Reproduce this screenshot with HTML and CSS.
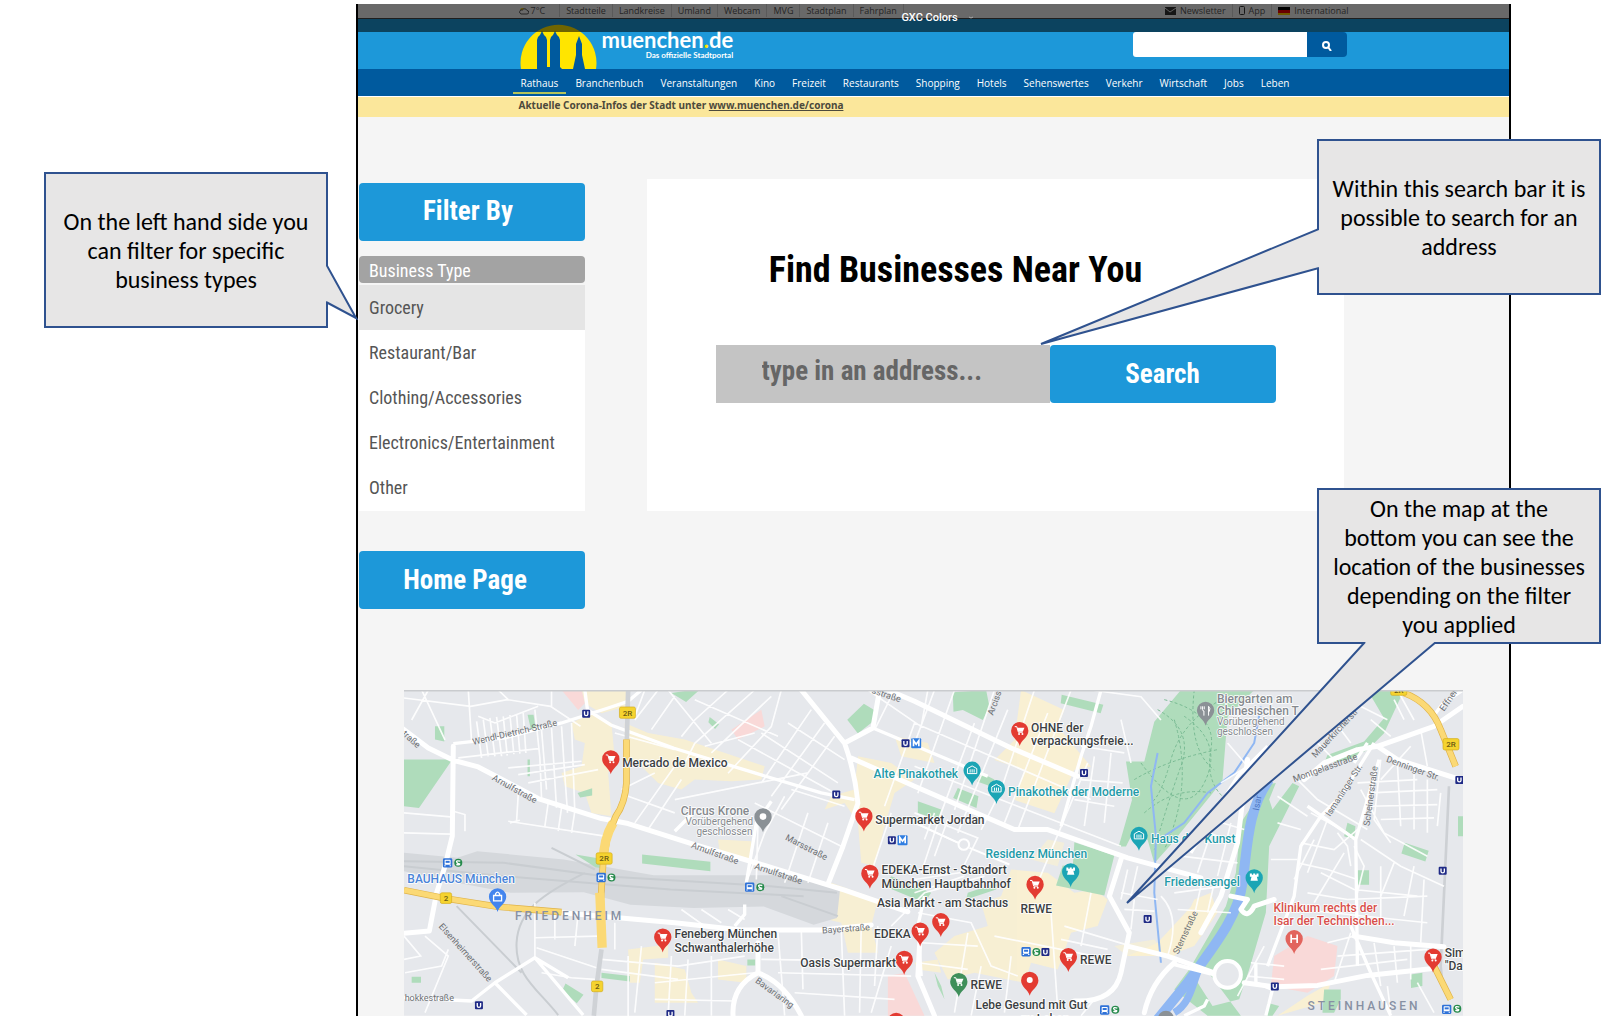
FILE: index.html
```html
<!DOCTYPE html>
<html lang="en">
<head>
<meta charset="utf-8">
<title>Find Businesses Near You</title>
<link rel="stylesheet" href="styles.css">
</head>
<body>
<div class="frame">
  <header class="site-header">
    <div class="topbar">
      <div class="container topbar-row">
        <span class="weather"><svg width="10" height="8" viewBox="0 0 20 16"><circle cx="7" cy="7" r="5" fill="#e8c200"/><path d="M4 14h12a3 3 0 0 0 0-7 5 5 0 0 0-9-1 4 4 0 0 0-3 8z" fill="#eee" stroke="#555" stroke-width="2"/></svg>7°C</span>
        <a href="#">Stadtteile</a><a href="#">Landkreise</a><a href="#">Umland</a><a href="#">Webcam</a><a href="#">MVG</a><a href="#">Stadtplan</a><a href="#">Fahrplan</a>
        <a href="#" class="push"><svg width="11" height="8" viewBox="0 0 11 8"><path d="M0 0h11v8H0z" fill="#333"/><path d="M0 1l5 4 6-4" fill="none" stroke="#ddd"/></svg>Newsletter</a>
        <a href="#"><svg width="6" height="9" viewBox="0 0 6 9"><rect x=".5" y=".5" width="5" height="8" rx="1" fill="none" stroke="#333"/></svg>App</a>
        <a href="#"><svg width="12" height="8" viewBox="0 0 12 8"><path d="M0 0h12v3H0z" fill="#000"/><path d="M0 3h12v3H0z" fill="#e00"/><path d="M0 6h12v2H0z" fill="#fc0"/></svg>International</a>
      </div>
    </div>
    <div class="brandbar">
      <div class="container brand-row">
        <a href="#" class="brand" aria-label="muenchen.de">
          <svg class="logo" width="78" height="46" viewBox="0 0 78 46">
            <path d="M2 46A38 38 0 1 1 77 46Z" fill="#ffe500"/>
            <path d="M18 46V17q0-3 3-5l2-4 2 4q3 2 3 5v27h3V17q0-3 3-5l2-4 2 4q3 2 3 5v27l2 2zM54 46l3-14V21l3-8 3 8v11l3 14z" fill="#005a9e"/>
          </svg>
          <span class="brand-text"><span class="brand-name">muenchen<i>.</i>de</span><span class="brand-tag">Das offizielle Stadtportal</span></span>
        </a>
        <form class="site-search">
          <input type="search" aria-label="Site search">
          <button type="button" aria-label="Search site"><svg width="10" height="10" viewBox="0 0 10 10" fill="none" stroke="#fff" stroke-width="2"><circle cx="4" cy="4" r="3"/><path d="M6 6l3 4"/></svg></button>
        </form>
      </div>
    </div>
    <nav class="nav">
      <div class="container nav-row">
        <a href="#" class="active">Rathaus</a><a href="#">Branchenbuch</a><a href="#">Veranstaltungen</a><a href="#">Kino</a><a href="#">Freizeit</a><a href="#">Restaurants</a><a href="#">Shopping</a><a href="#">Hotels</a><a href="#">Sehenswertes</a><a href="#">Verkehr</a><a href="#">Wirtschaft</a><a href="#">Jobs</a><a href="#">Leben</a>
      </div>
    </nav>
    <div class="notice"><p class="container">Aktuelle Corona-Infos der Stadt unter <a href="#">www.muenchen.de/corona</a></p></div>
    <div class="shade"><span>GXC Colors</span><svg width="6" height="4" viewBox="0 0 6 4"><path d="M1 1l2 1 2-1" fill="none" stroke="#aaa"/></svg></div>
  </header>

  <main class="content">
    <aside class="sidebar">
      <button type="button" class="btn filter">Filter By</button>
      <h2 class="group">Business Type</h2>
      <ul class="types">
        <li><button type="button" class="selected">Grocery</button></li>
        <li><button type="button">Restaurant/Bar</button></li>
        <li><button type="button">Clothing/Accessories</button></li>
        <li><button type="button">Electronics/Entertainment</button></li>
        <li><button type="button">Other</button></li>
      </ul>
      <button type="button" class="btn home">Home Page</button>
    </aside>
    <section class="finder">
      <h1>Find Businesses Near You</h1>
      <form class="address">
        <input type="text" aria-label="Address" placeholder="type in an address...">
        <button type="button" class="btn">Search</button>
      </form>
    </section>
  </main>

  <div class="map">
  <svg viewBox="27 31 3180 978" role="img" aria-label="Map of Munich">
    <defs>
      <path id="pin" d="M0 46C-4 28-26 20-26 0A26 26 0 1 1 26 0C26 20 4 28 0 46Z"/>
      <g id="cart"><use href="#pin"/><path d="M-15-12h6l5 17h13" fill="none" stroke="#fff" stroke-width="3"/><path d="M-8-9h22l-5 12H-4z" fill="#fff"/><circle cx="-2" cy="10" r="3" fill="#fff"/><circle cx="8" cy="10" r="3" fill="#fff"/></g>
      <g id="museum"><use href="#pin"/><path d="M-14-5L0-13 14-5V10H-14Z" fill="none" stroke="#fff" stroke-width="3"/><path d="M-6-3V7M0-3V7M6-3V7" stroke="#fff" stroke-width="3"/></g>
      <g id="rook"><use href="#pin"/><path d="M-13-13h6v4h4v-4h6v4h4v-4h6v10H8l3 12h-22l3-12h-5z" fill="#fff"/></g>
      <g id="u"><rect x="-12" y="-12" width="24" height="24" rx="3" fill="#1f2a86"/><path d="M-5-7V2q0 4 5 4t5-4v-9" fill="none" stroke="#fff" stroke-width="4"/></g>
      <g id="bus"><rect x="-14" y="-14" width="28" height="28" rx="4" fill="#2f72d8"/><rect x="-9" y="-9" width="18" height="15" rx="2" fill="#fff"/><path d="M-6-6H6V0H-6Z" fill="#2f72d8"/><path d="M-8 7v3M8 7v3" stroke="#fff" stroke-width="4"/></g>
      <g id="s"><circle r="12" fill="#258a4b"/><path d="M6-5Q-6-8-5-3T4 3Q5 8-6 5" fill="none" stroke="#fff" stroke-width="4"/></g>
      <g id="m"><rect x="-15" y="-15" width="30" height="30" rx="3" fill="#2f7de1"/><path d="M-8 9V-8L0 3 8-8V9" fill="none" stroke="#fff" stroke-width="5"/></g>
    </defs>
    <rect x="27" y="31" width="3180" height="978" fill="#e6e8ec"/>

    <!-- built-up areas -->
    <g fill="#fbf1cf" opacity=".85">
      <path d="M560 31h140l-10 50-70 20-50-30zM530 130l60-30 60 30 10 110-20 40 10 130-60-10-20-60-60-20-10-40 60-20 10-70-30-10zM690 130l70 30 110 20 240 80-10 40-90 5-110-5-40 30-70-20-60-60-40-10z"/>
      <path d="M1390 230l100 20 70 50-60 40-30 100-30 120-40-10-10-120-40-60-60 20 20-40 70-20zM1500 170l100 20 20 60-100-20zM1310 610l140 50-20 80 20 80h-90l-20-90-40-10zM780 850l90 20 20 70 20 30h-130zM970 840l85 20v50l-85-10zM1560 850l70-10 10 40-70-10zM700 810l120-15v40l-75 5-10 70h-30zM970 480l100 5-5 55-90-20z"/>
      <path d="M1880 31l130 60-20 50 100 120-50 10-60 130-120-40 30-90-90-30 60-60zM1850 570l110 10 80 60 60-10 40 30-30 80-80 20-40 110-80-20-20 60-150-30-80 20-40-80 60-50 100-30-20-70 60-20zM2200 830l90-40 120-130 30 60-100 110zM2650 1009l90-60 70-40-20 60zM2400 660l50-20 20 60-70 100-80 30z"/>
    </g>
    <g fill="#f9d9d8"><path d="M500 31h60l10 40-20 20zM1010 150l90-60 10 50-80 40zM2640 830l100-60 90 30-10 90-80 50-110-20zM1480 890l50-10 60 129h-110z"/></g>
    <g fill="#fbf1cf" opacity=".6"><path d="M2160 800l120-20 30 40-110 10zM1960 480l50 10-20 70-80-20z"/></g>

    <!-- railway land -->
    <path d="M27 520l160 15 60-20 260 25 270 47h390l170 37-10 92-70 20-150-55-210 5-190-10-140-38-220 2-160-30-160-35z" fill="#d5d8dc"/>
    <path d="M27 545l300 5 300 40 500 30 200 20M27 560l300 30 500 40 400 20M470 505l130 65M570 580C450 640 370 690 365 790S430 930 490 1007M185 680L380 880M1160 650l170 60" fill="none" stroke="#c9cdd1" stroke-width="6"/>
    <path d="M3165 320l-25 540 5 50" fill="none" stroke="#cdd0d4" stroke-width="8"/>

    <!-- parks -->
    <g fill="#afdcbb">
      <path d="M27 240h145l-100 145-45-5zM120 140h28v46l-28-6zM398 105h18l6 40-14 4zM548 340l44-14v22l-36 6zM542 525l90 15v28l-30-5zM742 525l205 22v28l-205-23zM620 880l85 10v16l-85-10zM512 912l54 34-20 26-44-38zM50 892h28v18H50zM398 240h7v50h-7zM830 40l60-9h24l-40 36zM945 112l28 22-12 14-20-20zM1358 120l50-48 32 20v30l-50 40zM1058 840h24v18h-24zM1570 365l70 25-10 30-60-20zM1490 590l120 50-20 30-120-50zM1675 38l100-7 10 50-20 40-60-30-28 5zM1690 325l62 25-6 35-70-30zM1760 280l40 20-12 20-40-14zM2002 45l125 30-8 26-120-30zM2040 488l120 40-30 120-145-30 20-60 30 6zM1720 640l90-30-5 20-90 30zM1800 690l50 25zM1620 880l20 40 10 40-20-40z"/>
      <path d="M2360 31h220l-80 80-15 190-30 40-130 160-45 50-20-70-40-30-25 50h-22l40-140-18-115h55l30-120z"/>
      <path d="M2615 315l30-5-20 50 10 30 60-80 20 10-60 120-30 60-10 200-50 170-30 90-80 20-70-110 110-190 30-100 15-150zM2400 850l-60 80 100 79h100l-90-120zM2920 31h110l-60 130-50 50-60 30-70 10 10-25 110-40 60-70zM2860 430l24 10-4 40-30-10zM3032 490l72 24-10 32-72-24zM2890 572h35v44h-38zM3050 885l35-5v40l-34 6zM2790 930h50v30l-20 40h-35zM3192 410h15v60h-15zM2620 970l35 10-20 29h-20z"/>
    </g>
    <g fill="none" stroke="#78ba93" stroke-width="3" stroke-dasharray="9 7">
      <path d="M2290 90q110 60 70 170t-80 250M2310 60q160 40 140 150t60 160M2220 300q100-60 250-90M2240 250q130 180 190 60t-60-200M2250 400q90-80 200-60M2400 31q-20 180 60 240M2480 60q-120 70-150 180t-60 130M2340 120q60 200-30 390"/>
    </g>
    <g fill="none" stroke="#8fb7f3">
      <path d="M2625 300C2560 390 2560 500 2545 610S2450 810 2380 910L2290 1020" stroke-width="30"/>
      <path d="M2460 800C2390 860 2410 960 2340 1000" stroke-width="22"/>
      <path d="M2600 80l-20 110-60 90-80 60-70 90-60 40M2290 220l-20 100 15 150-5 170 20 210" stroke-width="6"/>
    </g>

    <!-- side streets -->
    <g fill="none" stroke="#fff" stroke-width="5" opacity=".9">
      <path d="M27 55l200 25 110-20 130 20 90 60M80 31l70 150M220 31l10 155M100 31l-50 90M340 60l-30-29M470 31v50M250 110l50 20 130-50M245 125l15 110M265 120l15 110M285 115l15 115M305 112l15 118M325 110l12 118M345 106l12 118M365 104l10 118M385 100l8 120M190 235l240-28M420 90l15 145 5 120M440 150l15 180M470 145l15 240M500 140l8 120 10 140M530 130l10 270M340 265l220-20M370 285l200-30M400 310l210-40M340 425l290 45M345 430l30-8M27 400l140 12M27 460l140 4M175 395l35 10v50M370 345l-5 80M460 370l-10 70M500 385l-10 70M540 395l-10 65"/>
      <path d="M660 160l180 50M750 31l-30 80M790 31l-70 90M840 50l-70 100M680 330l100-50M720 430l120-170M760 450l100-150M700 350l140 50M820 31l130 160M1000 31l-100 90-40 50M1080 31l-180 160-30 60M1130 50l-180 170M1160 31l-30 110-130 140M1250 90l-150 220M1290 130l-160 220M1320 170l-160 220M900 60l250 110M930 200l150-40M840 360l400-80M1080 370l260 130M1190 330l160 50M1170 350l-60 110-55 150M1240 400l-70 210M1300 430l-60 180M1090 430l-5 170M1180 130l170 110M1100 160l230 150M1030 180l290 160"/>
      <path d="M27 770l50 60-50 10M90 770l70 60-70 170M160 810l-20 50-110 20M420 670v170M420 775l190-5M425 805l180 60M440 880l90 15 70 5M480 690v90M550 700l-10 100M620 840l230 20M620 870l230 30M700 830v180M740 800l-20 200M660 730v80M850 860l200-30M780 910l300-30M780 960l240 5M830 830l-10 179M880 840l-10 169M950 830v179M1150 760l20 249M1220 750l5 180M1100 840l350 5M1150 880l400 10M1200 940l300 20M1340 750l10 259M1400 740l-5 260M1450 740l-10 180M1490 800l-60 200M860 690l70 50M920 690l60 40M1000 690l50 30"/>
      <path d="M1420 31l160 110 20-110M1500 31l-60 120M1560 130l-90 250M1620 31l-60 160M1680 31l-110 310M1740 130l-100 270-60 180M1800 31l-120 360M1840 90l-150 370M1920 31l-100 300-60 120M1960 100l-130 330M2030 31l-160 420M2080 250l-150 360M1560 130l530 230M1560 260l620 240M1560 400l190 75-40 80M1490 400l-60 180M1560 430l130 60M1620 400l-30 80M1660 420l-40 110M2090 31l150 20 60 70M2060 200l130 20M2055 300l130 10M2040 360l120 20M2100 230l-30 210M2150 220l-20 210M2180 120l30 130M1560 600l200-30M1560 640l150-50M1490 740l100-100 180-50M1570 700l160 30 60 130 80 30M1580 790l170 10M1570 850l150 20M1720 760l-40 240M1760 860l-30 149M1800 770l300 60M1850 830l-20 170M1970 700l20 290M2000 780l140 30M2010 740l200 60M2090 640l-30 160M2180 640l110 20M2190 690l90 5M2200 570l-20 90M2230 560l-20 90M2220 660l-10 90M2300 650q60 60 20 180M2100 960l-40 49"/>
      <path d="M2500 190l60 70-80 50M2450 420l100 30M2420 450l100 40M2360 530l170 20M2460 430l-50 150M2510 430l-40 160M2340 640l150-20M2350 690l160 10M2420 620l-20 90M2460 610l-20 90M2760 180l60 60M2810 110l60 80M2930 120l60 50M2860 60l120 60M3010 31l50 90M3080 150l20 110M3000 60l30 60M3050 200l-90 100M2710 300l60 60 150 90M2750 400l110 60M2720 490l100 20 70-60M2710 550l90 20 90 30M2650 430l70 20M2630 540h80M2650 350l90 60M2890 310l180-10M2930 340l200-10M2930 380l200-5M2960 420l160-5M2900 480l120 80 130 60M2900 330l70 130 130 70M2960 240l-20 180 50 70M3010 250l10 190M3060 270v180M3100 300v160M3140 340l-10 100M2830 460l30 40 10 60M2880 500l30 60-20 80M2780 580l100 50 190 20M2740 640l120 20 240-10M2720 690l380 40M2760 480l-60 120M2800 420l-60 160M2850 520l-90 150M2960 560v180M3000 550l-40 100M3060 560l-30 150M3090 600l-10 190M2800 790l80-20 100 20M2830 830l270-20M2780 870l260-30M2870 760l-50 150M2940 790l20 130M3000 800l10 110M3050 800v100M2980 920l10 80M3070 910l50 90M2570 850l100 10M2560 890l110 10M2610 800l-80 150"/>
    </g>
    <g fill="none" stroke="#fff" stroke-width="10" stroke-linejoin="round">
      <path d="M175 192L330 175 500 130 640 85 700 65 740 31M570 31l8 60 70 45 190 70 242 74 200 60 100 20M520 895L420 835 300 910 230 965 27 955M300 910l95 97M420 835l145 172M1435 145L1780 290M840 455l60-60M1055 610l30-180 45-65M1050 675v30l-30 35M2000 440l60-210 30-90 30-109M2620 860l80-210 20-150 60-90 60-60 100-160M2880 250l40-60M2890 860L2885 480l70-240M2885 480L2740 380M2870 740l60 140 60 129M2440 960l-10 20-60 29M2585 850v60l50 20-20 79M3207 31l-60 40-30 40M2390 520l140-230 90-90M1590 650l-20 90 10 150"/>
      <circle cx="1708" cy="495" r="16" stroke-width="6"/><path d="M1692 490l-130-60M1725 505l120 50" stroke-width="6"/>
    </g>
    <g fill="none" stroke="#fff" stroke-width="15" stroke-linejoin="round" stroke-linecap="round">
      <path d="M20 145l80 60 75 37 75 20 180 95 190 60 80 15 190 60 200 60 260 80 190 65M175 200l-3 270-22 90-25 80-22 115-80 7M500 700l340 30 200 22h240l150-15M1220 31l130 160q32 90 40 180l-45 130-43 108M1350 190l85-45 20-114M1430 10l130 55 290 140 200 85M1370 235l190 85 300 130 100 0 240 85 220 60M2180 540l-35 110 60 110-25 120q-20 90-140 85M2200 800l120 30 140 50M1090 880l0-90M1090 880q-80 40-75 129M1090 880q80 30 130 129M1575 800l-5 90 50 119M2340 850q-70 60-90 150M2560 240l-30 250-50 160-60 110M2730 300l60-50 100-40 60-10 170-60 87-60M2950 200l60 40 196 62M2550 910l90 12 130-4 150-30 190-20M2880 770l120 20 150 12M2510 650l50 10-20 30q20 30 40-10l60-20"/>
      <circle cx="2500" cy="885" r="40" stroke-width="12" fill="#e6e8ec"/><path d="M2340 855l118 30" stroke-width="12"/>
    </g>
    <!-- federal roads -->
    <g fill="none" stroke="#cfd2d6" stroke-width="14"><path d="M700 31l-4 160M620 810l-15 110-8 89"/></g>
    <g fill="none" stroke="#dfb34a" stroke-width="20"><path d="M695 180v130q-4 60-32 100l-25 60-13 80-7 110 5 140M27 632l125 25 158 25 190 16M3030 40q80 30 110 110l45 110M3120 860l50 100"/></g>
    <g fill="none" stroke="#fbd975" stroke-width="16"><path d="M695 180v130q-4 60-32 100l-25 60-13 80-7 110 5 140M27 632l125 25 158 25 190 16M3030 40q80 30 110 110l45 110M3120 860l50 100"/></g>
    <path d="M655 430q-30 50-30 120M615 640l7 165" fill="none" stroke="#fbd975" stroke-width="28"/>

    <!-- road names -->
    <g class="street">
      <text transform="translate(235 196) rotate(-13)">Wendl-Dietrich-Straße</text>
      <text transform="translate(290 300) rotate(29)">Arnulfstraße</text>
      <text transform="translate(20 165) rotate(42)">traße</text>
      <text transform="translate(130 742) rotate(48)">Elsenheimerstraße</text>
      <text x="29" y="965">hokkestraße</text>
      <text transform="translate(888 504) rotate(20)">Arnulfstraße</text>
      <text transform="translate(1078 568) rotate(18)">Arnulfstraße</text>
      <text transform="translate(1170 480) rotate(27)">Marsstraße</text>
      <text transform="translate(1283 762) rotate(-4)">Bayerstraße</text>
      <text transform="translate(1080 908) rotate(36)">Bavariaring</text>
      <text transform="translate(1430 40) rotate(18)">sstraße</text>
      <text transform="translate(1796 108) rotate(-70)">Arciss</text>
      <text transform="translate(2352 826) rotate(-65)">Sternstraße</text>
      <text transform="translate(2764 236) rotate(-47)">Mauerkircherstr</text>
      <text transform="translate(2700 308) rotate(-20)">Montgelasstraße</text>
      <text transform="translate(2808 412) rotate(-57)">Ismaninger Str.</text>
      <text transform="translate(2926 440) rotate(-82)">Scheinerstraße</text>
      <text transform="translate(2975 246) rotate(20)">Denninger Str.</text>
      <text transform="translate(3150 96) rotate(-55)">Effner</text>
      <text class="river" transform="translate(2594 394) rotate(-80)">Isar</text>
    </g>
    <g class="district"><text x="360" y="721">FRIEDENHEIM</text><text x="2740" y="992">STEINHAUSEN</text></g>

    <!-- transit and road shields -->
    <use href="#u" x="574" y="102"/><use href="#u" x="252" y="978"/><use href="#u" x="827" y="1004"/><use href="#u" x="1325" y="345"/><use href="#u" x="1533" y="191"/><use href="#u" x="1492" y="482"/><use href="#u" x="2069" y="280"/><use href="#u" x="2260" y="719"/><use href="#u" x="1953" y="818"/><use href="#u" x="2642" y="921"/><use href="#u" x="3146" y="574"/><use href="#u" x="3196" y="301"/>
    <use href="#m" x="1565" y="191"/><use href="#m" x="1524" y="482"/>
    <use href="#bus" x="158" y="550"/><use href="#s" x="190" y="550"/><use href="#bus" x="619" y="594"/><use href="#s" x="650" y="594"/><use href="#bus" x="1065" y="623"/><use href="#s" x="1097" y="623"/><use href="#bus" x="1895" y="817"/><use href="#s" x="1926" y="818"/><use href="#bus" x="2131" y="992"/><use href="#s" x="2163" y="991"/><use href="#bus" x="3158" y="990"/><use href="#s" x="3190" y="988"/>
    <g fill="#f5d32f" stroke="#d3ac1b" stroke-width="2"><rect x="674" y="82" width="48" height="34" rx="5"/><rect x="604" y="520" width="48" height="34" rx="5"/><rect x="136" y="640" width="34" height="32" rx="5"/><rect x="590" y="905" width="34" height="32" rx="5"/><rect x="2990" y="15" width="48" height="32" rx="5"/><rect x="3147" y="177" width="48" height="34" rx="5"/></g>
    <g class="shield"><text x="698" y="108">2R</text><text x="628" y="546">2R</text><text x="153" y="665">2</text><text x="607" y="930">2</text><text x="3014" y="40">2R</text><text x="3171" y="203">2R</text></g>

    <!-- places -->
    <g fill="#e33b32">
      <use href="#cart" x="648" y="238"/><use href="#cart" x="1408" y="410"/><use href="#cart" x="1426" y="582"/><use href="#cart" x="804" y="773"/><use href="#cart" x="1529" y="840"/><use href="#cart" x="1639" y="727"/><use href="#cart" x="1577" y="755"/><use href="#cart" x="1876" y="153"/><use href="#cart" x="1922" y="615"/><use href="#cart" x="2022" y="832"/><use href="#cart" x="3117" y="833"/><use href="#pin" x="1906" y="903"/><use href="#pin" x="1505" y="1026"/>
    </g>
    <circle cx="1906" cy="902" r="9" fill="#fff"/>
    <use href="#cart" x="1693" y="907" fill="#3f8f5a"/>
    <g fill="#1ba5b5"><use href="#museum" x="1733" y="272"/><use href="#museum" x="1806" y="327"/><use href="#museum" x="2234" y="468"/><use href="#rook" x="2029" y="577"/><use href="#rook" x="2580" y="595"/></g>
    <g fill="#8b9196"><use href="#pin" x="1105" y="412"/><use href="#pin" x="2434" y="92"/><circle cx="2315" cy="1018" r="24"/></g>
    <circle cx="1105" cy="411" r="10" fill="#fff"/><path d="M2425 80v10q0 4 4 4v14M2420 80v9M2430 80v9M2443 80v28M2443 80q7 6 2 16" fill="none" stroke="#fff" stroke-width="3"/>
    <use href="#pin" x="2700" y="778" fill="#e2645d"/><path d="M2691 765v26M2709 765v26M2691 778h18" stroke="#fff" stroke-width="5"/>
    <use href="#pin" x="308" y="652" fill="#4385ee"/><path d="M296 648h24v16h-24zM302 648v-5q6-10 12 0v5" fill="#4385ee" stroke="#fff" stroke-width="4"/>

    <g class="place">
      <text x="682" y="263">Mercado de Mexico</text>
      <text x="1442" y="433">Supermarket Jordan</text>
      <text x="1461" y="585">EDEKA-Ernst - Standort</text><text x="1461" y="625">München Hauptbahnhof</text>
      <text x="1447" y="683">Asia Markt - am Stachus</text>
      <text x="1438" y="777">EDEKA</text><text x="1217" y="864">Oasis Supermarkt</text>
      <text x="839" y="777">Feneberg München</text><text x="839" y="818">Schwanthalerhöhe</text>
      <text x="1910" y="157">OHNE der</text><text x="1910" y="195">verpackungsfreie...</text>
      <text x="1878" y="701">REWE</text><text x="2057" y="855">REWE</text><text x="1728" y="930">REWE</text>
      <text x="1743" y="990">Lebe Gesund mit Gut</text><text x="1880" y="1030">zu Leben</text>
      <text x="3152" y="833">Sim</text><text x="3152" y="873">"Da</text>
    </g>
    <g class="place culture">
      <text x="1437" y="294">Alte Pinakothek</text><text x="1841" y="349">Pinakothek der Moderne</text><text x="1773" y="534">Residenz München</text><text x="2270" y="491">Haus der</text><text x="2431" y="491">Kunst</text><text x="2310" y="620">Friedensengel</text>
    </g>
    <text class="place shop" x="37" y="611">BAUHAUS München</text>
    <g class="place health"><text x="2638" y="699">Klinikum rechts der</text><text x="2638" y="737">Isar der Technischen...</text></g>
    <g class="place closed"><text x="858" y="406">Circus Krone</text><text x="2468" y="69">Biergarten am</text><text x="2468" y="107">Chinesischen T</text></g>
    <g class="note"><text x="872" y="437">Vorübergehend</text><text x="905" y="467">geschlossen</text><text x="2468" y="136">Vorübergehend</text><text x="2468" y="165">geschlossen</text></g>
    <path d="M27 33h3180" stroke="#c9cbce" stroke-width="5"/>
  </svg>
  </div>
</div>

<aside class="callout callout-filter">
  <svg width="32" height="60" viewBox="0 0 32 60"><path d="M0 3L30 57 0 41" /></svg>
  <p>On the left hand side you can filter for specific business types</p>
</aside>
<aside class="callout callout-search">
  <svg width="280" height="120" viewBox="0 0 280 120"><path d="M280 2L2 117 280 41"/></svg>
  <p>Within this search bar it is possible to search for an address</p>
</aside>
<aside class="callout callout-map">
  <svg width="320" height="264" viewBox="0 0 320 264"><path d="M240 0L2 261 311 0"/></svg>
  <p>On the map at the<br>bottom you can see the<br>location of the businesses<br>depending on the filter<br>you applied</p>
</aside>
</body>
</html>
```
FILE: styles.css
```css
* { box-sizing: border-box; }
body { margin: 0; padding-top: 4px; position: relative; background: #fff; font-family: "Open Sans", sans-serif; }
a { color: inherit; text-decoration: none; }
button, input { font: inherit; border: 0; margin: 0; }
h1, h2, p, ul { margin: 0; padding: 0; }

.frame { margin: 0 98px 11px 356px; border: solid #000; border-width: 0 2px; background: #f5f5f5; }
.container { width: 100%; max-width: 830px; margin: 0 auto; }

/* header */
.site-header { position: relative; }
.topbar { height: 15px; background: #f0f0f0; border-bottom: 1px solid #444; }
.topbar-row { display: flex; align-items: center; height: 13px; font-size: 9px; line-height: 13px; color: #555; }
.topbar-row > * { display: flex; align-items: center; gap: 4px; padding: 0 6px; border-right: 1px solid #ccc; white-space: nowrap; }
.topbar-row > .weather { padding: 0 14px 0 0; gap: 2px; }
.topbar-row > .push { margin-left: auto; }
.topbar-row > :last-child { padding-right: 0; border: 0; }
.shade { position: absolute; inset: 0 0 auto 0; height: 28px; padding-left: 8px; background: rgba(0, 0, 0, .56); color: #fff; display: flex; gap: 10px; align-items: center; justify-content: center; font: 500 11px/26px Roboto, sans-serif; }
.brandbar { background: #1d98d9; height: 50px; }
.brand-row { display: flex; justify-content: space-between; align-items: flex-start; }
.brand { display: flex; gap: 5px; margin-top: 4px; }
.brand-text { display: flex; flex-direction: column; color: #fff; padding-top: 5px; }
.brand-name { font: 700 22px/23px Lato, sans-serif; }
.brand-name i { color: #ffe500; font-style: normal; }
.brand-tag { font: 700 8px/8px Lato, sans-serif; text-align: right; }
.site-search { display: flex; margin: 13px 2px 0 0; }
.site-search input { width: 174px; height: 25px; border-radius: 3px 0 0 3px; background: #fff; padding: 0 6px; }
.site-search button { width: 40px; height: 25px; padding: 0; border-radius: 0 4px 4px 0; background: #005a9e; }
.nav { background: #005a9e; }
.nav-row { display: flex; gap: 17px; font-size: 10px; line-height: 28px; height: 27px; color: #fff; padding-left: 2px; white-space: nowrap; }
.nav-row .active { margin: 0 -8px; padding: 0 8px; box-shadow: inset 0 -2px #005a9e, inset 0 -4px #b5c45a; }
.notice { background: #fbe79b; border-top: 1px solid #fff; color: #4d4a3c; font: 700 10px/16px "Noto Sans", sans-serif; padding-bottom: 4px; }
.notice a { text-decoration: underline; }

/* page content */
.content { display: grid; grid-template-columns: 226px minmax(0, 1fr); column-gap: 62px; align-items: start; padding: 62px 165px 81px 1px; font-family: "Roboto Condensed", "Liberation Sans Narrow", Roboto, sans-serif; }
.sidebar { padding-top: 4px; }
.btn { display: block; width: 226px; height: 58px; padding: 0; border-radius: 4px; background: #1d98d9; color: #fff; font-weight: 700; font-size: 27px; }
.filter { padding: 0 8px 3px 0; }
.home { margin-top: 40px; padding-right: 14px; }
.group { margin: 15px 0 2px; padding: 2px 10px 0; height: 27px; border-radius: 4px; background: #a3a3a3; color: #fff; font-size: 18px; line-height: 26px; font-weight: 400; }
.types { list-style: none; background: #fff; padding-bottom: 1px; }
.types button { width: 100%; height: 45px; padding: 0 10px; background: none; color: #555; font-size: 18px; text-align: left; }
.types .selected { background: #e5e5e5; }
.finder { background: #fff; padding: 69px 0 108px; }
.finder h1 { padding-right: 80px; text-align: center; font-size: 36px; line-height: 44px; }
.address { display: flex; justify-content: center; margin-top: 53px; }
.address input { width: 334px; height: 58px; padding: 0 46px 6px; background: #c4c4c4; font-size: 27px; font-weight: 700; }
.address input::placeholder { color: #666; opacity: 1; }

/* map */
.map { margin: 0 46px; }
.map svg { display: block; width: 100%; height: auto; font-family: Roboto, sans-serif; }
.street { font-size: 27px; fill: #6d7074; }
.river { fill: #4f78c4; }
.district { font-size: 36px; font-weight: 500; fill: #8790a3; letter-spacing: 9px; }
.shield { font-size: 24px; font-weight: 500; fill: #6b5a12; text-anchor: middle; }
.place { font-size: 36px; font-weight: 500; fill: #3c3f43; paint-order: stroke; stroke: #fff; stroke-width: 5px; stroke-linejoin: round; }
.culture { fill: #239aa8; }
.shop { fill: #4a84d8; }
.health { fill: #d8504b; }
.closed { fill: #85898e; }
.note { font-size: 30px; fill: #85898e; paint-order: stroke; stroke: #fff; stroke-width: 4px; }

/* callouts */
.callout { position: absolute; width: 284px; height: 156px; border: 2px solid #2f528f; background: #e7e6e6; display: flex; align-items: center; justify-content: center; padding: 0 12px; font: 24px/29px Carlito, Lato, sans-serif; color: #000; text-align: center; }
.callout svg { position: absolute; fill: #e7e6e6; stroke: #2f528f; stroke-width: 2; }
.callout-filter { left: 44px; top: 172px; }
.callout-filter svg { left: 280px; top: 87px; }
.callout-search { right: 8px; top: 139px; }
.callout-search svg { right: 280px; top: 86px; }
.callout-map { right: 8px; top: 488px; }
.callout-map svg { left: -194px; top: 152px; }
```
